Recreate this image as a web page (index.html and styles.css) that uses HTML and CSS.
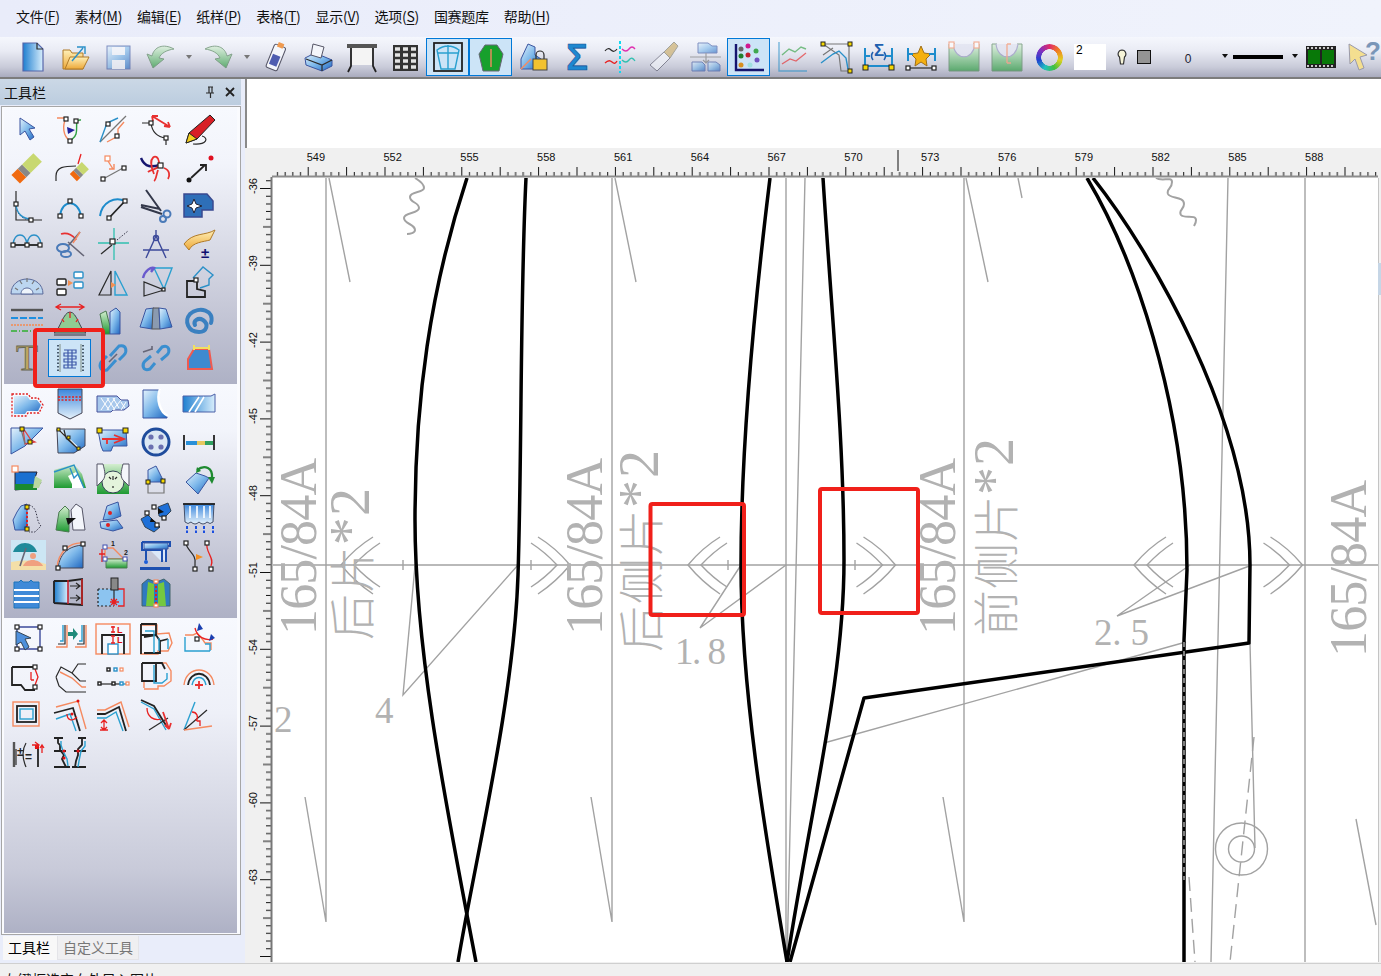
FILE: index.html
```html
<!DOCTYPE html>
<html lang="zh-CN">
<head>
<meta charset="utf-8">
<title>工具栏</title>
<link rel="stylesheet" href="styles.css">
</head>
<body>
<svg class="defs" width="0" height="0" aria-hidden="true"><defs>
<linearGradient id="gb" x1="0" y1="0" x2="1" y2="1"><stop offset="0" stop-color="#e4f2fc"/><stop offset=".5" stop-color="#7db8ea"/><stop offset="1" stop-color="#1f66c0"/></linearGradient>
<linearGradient id="gh" x1="0" y1="0" x2="1" y2="0"><stop offset="0" stop-color="#1f7fd0"/><stop offset="1" stop-color="#d8eefc"/></linearGradient>
<linearGradient id="gg" x1="0" y1="0" x2="0" y2="1"><stop offset="0" stop-color="#d4eed0"/><stop offset="1" stop-color="#1e9a32"/></linearGradient>
<linearGradient id="gy" x1="0" y1="0" x2="0" y2="1"><stop offset="0" stop-color="#fff0b8"/><stop offset="1" stop-color="#eda838"/></linearGradient>
<linearGradient id="gv" x1="0" y1="0" x2="0" y2="1"><stop offset="0" stop-color="#3a86dc"/><stop offset="1" stop-color="#e6f2fb"/></linearGradient>
</defs></svg>

<nav class="menubar">
<span class="mi">文件(<u>F</u>)</span><span class="mi">素材(<u>M</u>)</span><span class="mi">编辑(<u>E</u>)</span><span class="mi">纸样(<u>P</u>)</span><span class="mi">表格(<u>T</u>)</span><span class="mi">显示(<u>V</u>)</span><span class="mi">选项(<u>S</u>)</span><span class="mi">国赛题库</span><span class="mi">帮助(<u>H</u>)</span>
</nav>

<div class="toolbar">
<div class="tb"><svg class="ic" viewBox="0 0 32 32"><path class="fh" d="M7,2H21L27,8V30H7Z"/><path class="ln" d="M21,2V8H27"/></svg></div>
<div class="tb"><svg class="ic" viewBox="0 0 32 32"><path class="fy" d="M4,9H11L13,12H24V28H4Z"/><path class="fy" d="M6,28L11,16H30L24,28Z"/><path class="b" d="M13,20L24,7M18,6H26V13"/></svg></div>
<div class="tb"><svg class="ic fade" viewBox="0 0 32 32"><rect class="fb" x="5" y="5" width="23" height="23"/><rect class="wf" x="10" y="6" width="13" height="8"/><rect class="wf" x="10" y="19" width="13" height="9"/></svg></div>
<div class="tb"><svg class="ic fade" viewBox="0 0 32 32"><path class="fg" transform="matrix(-1 0 0 1 32 0)" d="M3,8C14,2 23,6 25,15L30,13L24,27L13,18L18,17C16,12 10,9 3,8Z"/></svg></div>
<div class="drop"></div>
<div class="tb"><svg class="ic fade" viewBox="0 0 32 32"><path class="fg" d="M3,8C14,2 23,6 25,15L30,13L24,27L13,18L18,17C16,12 10,9 3,8Z"/></svg></div>
<div class="drop"></div>
<div class="tb"><svg class="ic" viewBox="0 0 32 32"><g transform="rotate(22 16 16)"><rect class="wf2" x="10" y="4" width="12" height="25" rx="2"/><rect x="12" y="14" width="8" height="11" fill="#4f5db0"/><rect x="13" y="1" width="6" height="5" fill="#ef9a50"/></g></svg></div>
<div class="tb"><svg class="ic" viewBox="0 0 32 32"><path class="fb" d="M2,17L12,12L29,19V25L19,30L3,24Z"/><path class="wf2" d="M8,14L10,3L21,6L18,17Z"/><path class="ln" d="M3,18L19,24L29,19M19,24V30"/></svg></div>
<div class="tb"><svg class="ic" viewBox="0 0 32 32"><rect x="1" y="3" width="30" height="4" fill="#555"/><rect class="wf3" x="6" y="7" width="20" height="17"/><path class="k2" d="M5,7V25L2,31M27,7V25L30,31"/></svg></div>
<div class="tb"><svg class="ic" viewBox="0 0 32 32"><rect x="4" y="4" width="25" height="26" fill="#333"/><path class="gc" d="M6,8H11M14,8H19M22,8H27M6,14H11M14,14H19M22,14H27M6,20H11M14,20H19M22,20H27M6,26H11M14,26H19M22,26H27"/></svg></div>
<div class="tb sel"><svg class="ic" viewBox="0 0 32 32"><rect class="k2" x="2" y="2" width="28" height="28"/><path class="tq" d="M5,9Q16,1 27,9L23,28H9ZM5,12H27M16,4V28"/></svg></div>
<div class="tb sel"><svg class="ic" viewBox="0 0 32 32"><path d="M10,4H22L28,13L24,30H8L4,13Z" fill="#17a02c" stroke="#667"/><path class="o" d="M16,8V26"/></svg></div>
<div class="tb"><svg class="ic" viewBox="0 0 32 32"><path class="fb" d="M10,3L17,6V14L23,18V28H3V18Z"/><path class="k1" d="M18,18V14A4,4 0 0 1 26,14V18"/><rect x="15" y="18" width="14" height="11" fill="#f2c230" stroke="#444"/><path class="o" d="M3,28L13,18"/></svg></div>
<div class="tb"><svg class="ic" viewBox="0 0 32 32"><text class="sig" x="16" y="29">Σ</text></svg></div>
<div class="tb"><svg class="ic" viewBox="0 0 32 32"><path class="k1" d="M1,10Q4,6 7,9T13,8"/><path class="pk" d="M18,8Q22,12 25,8T31,8"/><path class="r" d="M1,22Q5,18 8,21T13,20"/><path class="tl" d="M18,19Q22,23 25,19T31,20"/><path class="cy" d="M16,0V32"/></svg></div>
<div class="tb"><svg class="ic fade" viewBox="0 0 32 32"><path class="wf2" d="M3,24L17,11L23,17L10,30Z"/><path d="M17,11L27,1L31,5L23,17Z" fill="#c8a860" stroke="#776"/></svg></div>
<div class="tb"><svg class="ic fade" viewBox="0 0 32 32"><path class="fb" d="M8,2H18L22,5H27V12H8Z"/><path class="fb" d="M2,21H12L15,24V30H2Z"/><path class="fb" d="M18,21H26L30,24V30H18Z"/><path class="a" d="M0,16H31M16,12V22M13,19L16,22L19,19"/></svg></div>
<div class="tb sel"><svg class="ic" viewBox="0 0 32 32"><path class="nv" d="M3,3V29H31"/><circle cx="8" cy="8" r="2.5" fill="#666"/><circle cx="15" cy="5" r="2.5" fill="#d01890"/><circle cx="15" cy="14" r="2.5" fill="#c02030"/><circle cx="8" cy="15" r="2.5" fill="#20802c"/><circle cx="23" cy="10" r="2.5" fill="#40a850"/><circle cx="24" cy="19" r="2.5" fill="#7050c0"/><circle cx="8" cy="24" r="2.5" fill="#d89020"/><circle cx="17" cy="24" r="2.5" fill="#a0e0e0"/></svg></div>
<div class="tb"><svg class="ic fade" viewBox="0 0 32 32"><path class="b" d="M3,1V30H31"/><path class="g" d="M6,14L13,8L19,11L25,6L30,8"/><path class="r" d="M6,23L14,18L20,20L30,12"/></svg></div>
<div class="tb"><svg class="ic" viewBox="0 0 32 32"><path class="a" d="M4,3H30V30H22L20,14L4,3M4,14L14,7"/><path class="b" d="M2,22L14,13L20,10L27,17L29,28"/><rect class="hy" x="2" y="1" width="4" height="4"/><rect class="hy" x="29" y="1" width="4" height="4"/><rect class="hy" x="29" y="28" width="4" height="4"/></svg></div>
<div class="tb"><svg class="ic" viewBox="0 0 32 32"><text class="sigs" x="17" y="15">Σ</text><path class="b2" d="M3,7V27M30,7V27M3,15H8M24,15H30M3,25H30"/><path class="bt" d="M11,11Q8,15 11,19M22,11Q25,15 22,19"/><rect class="hy" x="1" y="24" width="5" height="5"/><rect class="hy" x="27" y="24" width="5" height="5"/></svg></div>
<div class="tb"><svg class="ic" viewBox="0 0 32 32"><path d="M16,5L19,12L26,13L21,18L22,25L16,21L10,25L11,18L6,13L13,12Z" fill="#f4b010" stroke="#a07018"/><path class="b2" d="M3,7V20M30,7V20M3,13H8M24,13H30"/><path class="k1" d="M3,27H30"/><rect class="h" x="1" y="25" width="4" height="4"/><rect class="h" x="27" y="25" width="4" height="4"/></svg></div>
<div class="tb"><svg class="ic fade" viewBox="0 0 32 32"><path class="fg" d="M1,3H7C8,16 24,16 25,3H31V30H1Z"/><path class="ul" d="M5,3C7,20 25,20 27,3"/><rect class="ho" x="1" y="1" width="5" height="6"/><rect class="ho" x="26" y="1" width="5" height="6"/></svg></div>
<div class="tb"><svg class="ic fade" viewBox="0 0 32 32"><path class="fg" d="M1,3H6C8,16 24,16 26,3H31V30H1Z"/><path class="ul" d="M5,3C7,20 25,20 27,3"/><path class="o" d="M16,3V22M16,3H20M16,22H20"/></svg></div>
<div class="tb"><div class="ring"></div></div>
<div class="numbox">2</div>
<div class="bulb"><svg class="ic16" viewBox="0 0 10 16"><path d="M5,1A4,4 0 0 1 7.500,8L6.500,15H3.500L2.500,8A4,4 0 0 1 5,1Z" fill="#f6f4d8" stroke="#333" stroke-width="1.2"/></svg></div>
<div class="swatch"></div>
<div class="zero">0</div>
<div class="mini first"></div>
<div class="thick"></div>
<div class="mini"></div>
<svg class="film" viewBox="0 0 30 22"><rect width="30" height="22" fill="#222"/><rect x="2" y="4" width="12" height="14" fill="#087808"/><rect x="16" y="4" width="12" height="14" fill="#087808"/><path class="wl dash" d="M1,2H29M1,20H29"/></svg>
<svg class="ic help" viewBox="0 0 32 32"><path d="M2,3L20,14L13,16L17,27L12,29L8,18L3,23Z" fill="#f4df90" stroke="#99a"/><text class="q" x="18" y="19">?</text></svg>
</div>

<main class="main">
<aside class="side">
<header class="side-head"><span class="side-title">工具栏</span>
<svg class="pin" viewBox="0 0 10 12"><path d="M3,1H8M4,1V7H7V1M1,7H9M5.5,7V12" class="k1"/></svg>
<svg class="close" viewBox="0 0 12 12"><path d="M2,2L10,10M10,2L2,10" class="k2"/></svg>
</header>
<div class="panel">
<section class="tools s1">
<div class="cell"><svg class="ic" viewBox="0 0 32 32"><path class="fb" d="M9,4V21L14,17L19,26L23,23L18,15L24,14Z"/></svg></div>
<div class="cell"><svg class="ic" viewBox="0 0 32 32"><path class="o" d="M3,4H12C8,12 9,22 16,27"/><path class="g" d="M27,6C20,5 24,14 22,20C21,24 18,25 16,27"/><path class="nf" d="M13,13L21,16L14,20Z"/><rect class="h" x="10" y="3" width="4" height="4"/><rect class="h" x="20" y="5" width="4" height="4"/><rect class="h" x="14" y="25" width="4" height="4"/></svg></div>
<div class="cell"><svg class="ic" viewBox="0 0 32 32"><path class="a" d="M3,28L29,2"/><path class="b" d="M3,28L10,9L21,4"/><path class="o" d="M10,28L21,22V15L27,8"/><rect class="h" x="9" y="8" width="4" height="4"/><rect class="h" x="18" y="20" width="4" height="4"/></svg></div>
<div class="cell"><svg class="ic" viewBox="0 0 32 32"><path class="k1" d="M2,9H11C12,18 18,23 26,24V31"/><path class="r2" d="M12,2L30,13M12,2L18,2M12,2L13,7M30,13L24,12M30,13L28,8"/><rect class="h" x="9" y="7" width="4" height="4"/><rect class="h" x="24" y="22" width="4" height="4"/></svg></div>
<div class="cell"><svg class="ic" viewBox="0 0 32 32"><path d="M3,29L6,19L27,1L32,6L14,25Z" fill="#d81f26" stroke="#222"/><path d="M3,29L6,19L14,25Z" fill="#f4d020" stroke="#222"/><path class="k1" d="M10,30C24,31 26,24 19,22"/></svg></div>

<div class="cell"><svg class="ic" viewBox="0 0 32 32"><g transform="rotate(-45 16 16)"><rect x="0" y="10" width="9" height="12" fill="#f06a10"/><rect x="9" y="10" width="6" height="12" fill="#888"/><rect x="15" y="10" width="16" height="12" fill="#c8d870"/></g></svg></div>
<div class="cell"><svg class="ic" viewBox="0 0 32 32"><path class="k1" d="M2,29V24C2,15 10,14 22,14"/><g transform="rotate(-45 25 20)"><rect x="17" y="15" width="5" height="10" fill="#f06a10"/><rect x="22" y="15" width="4" height="10" fill="#888"/><rect x="26" y="15" width="8" height="10" fill="#c8d870"/></g><path class="r" d="M24,12L27,2"/></svg></div>
<div class="cell"><svg class="ic" viewBox="0 0 32 32"><rect class="ho" x="8" y="4" width="5" height="5"/><path class="o" d="M11,9L16,17M12,17H17V12"/><path class="a" d="M6,27L26,16"/><rect class="h" x="4" y="25" width="4" height="4"/><rect class="h" x="25" y="14" width="4" height="4"/></svg></div>
<div class="cell"><svg class="ic" viewBox="0 0 32 32"><path class="nv" d="M1,6C5,16 12,15 20,13"/><path class="r2" d="M14,22C6,4 18,0 19,10C20,18 11,17 8,20M18,18C16,24 16,28 14,29M24,16C30,18 30,24 28,27"/><rect class="h" x="18" y="11" width="5" height="5"/></svg></div>
<div class="cell"><svg class="ic" viewBox="0 0 32 32"><circle cx="6" cy="28" r="2.5" fill="#111"/><path class="k2" d="M8,26L22,13M17,13H23V19"/><circle cx="28" cy="6" r="2.5" fill="#e01020"/></svg></div>

<div class="cell"><svg class="ic" viewBox="0 0 32 32"><path class="k1" d="M5,1V30H31"/><path class="dot" d="M5,14C5,24 12,30 20,30"/><path class="b" d="M5,15C6,24 12,29 20,29"/><rect class="h" x="3" y="12" width="4" height="4"/><rect class="h" x="18" y="28" width="4" height="4"/></svg></div>
<div class="cell"><svg class="ic" viewBox="0 0 32 32"><path class="b2" d="M6,26C8,9 24,9 27,26"/><rect class="h" x="4" y="24" width="4" height="4"/><rect class="h" x="25" y="24" width="4" height="4"/><rect class="h" x="14" y="9" width="4" height="4"/></svg></div>
<div class="cell"><svg class="ic" viewBox="0 0 32 32"><path class="b2" d="M3,26C5,12 18,6 28,11"/><path class="k2" d="M12,28L28,11"/><rect class="h" x="10" y="26" width="4" height="4"/><rect class="h" x="26" y="9" width="4" height="4"/></svg></div>
<div class="cell"><svg class="ic" viewBox="0 0 32 32"><path class="bl" d="M1,17L22,24M6,0L21,21M20,19L1,15"/><circle cx="27" cy="24" r="3.5" class="sc"/><circle cx="23" cy="29" r="3" class="sc"/></svg></div>
<div class="cell"><svg class="ic" viewBox="0 0 32 32"><path class="fbd" d="M1,4H24L30,11V20H19V27H1Z"/><path d="M11,9L13,14L19,16L13,18L11,23L9,18L4,16L9,14Z" fill="#fff" stroke="#223"/></svg></div>

<div class="cell"><svg class="ic" viewBox="0 0 32 32"><path class="b" d="M2,16C4,4 14,4 16,16C18,4 28,4 30,16"/><path class="k2" d="M2,17H30"/><rect class="h" x="0" y="15" width="4" height="4"/><rect class="h" x="14" y="15" width="4" height="4"/><rect class="h" x="27" y="15" width="4" height="4"/></svg></div>
<div class="cell"><svg class="ic" viewBox="0 0 32 32"><path class="r2" d="M7,6C14,4 20,8 22,12"/><path class="a2" d="M14,18L26,4M14,14L30,28"/><ellipse cx="9" cy="20" rx="6" ry="4" class="sc"/><ellipse cx="12" cy="26" rx="5" ry="3" class="sc"/><path class="o" d="M19,15L26,4"/></svg></div>
<div class="cell"><svg class="ic" viewBox="0 0 32 32"><path class="tl" d="M17,0V32M1,15H32"/><path class="k1" d="M4,26L15,17"/><path class="dot" d="M20,12L31,3"/><rect class="h" x="13" y="11" width="5" height="5"/></svg></div>
<div class="cell"><svg class="ic" viewBox="0 0 32 32"><path class="nv1" d="M16,2V8M16,8L6,30M16,8L26,30M3,22H29"/><circle cx="16" cy="10" r="2.5" class="nv1"/></svg></div>
<div class="cell"><svg class="ic" viewBox="0 0 32 32"><path class="fy" d="M1,16C10,4 22,8 32,2L27,12C20,14 10,14 6,22Z"/><text class="pm" x="22" y="30">±</text></svg></div>

<div class="cell"><svg class="ic" viewBox="0 0 32 32"><path d="M0,28C0,8 32,8 32,28Z" fill="#bcd6f0" stroke="#5a6a9a"/><path d="M10,28C10,20 22,20 22,28Z" fill="#eef4fb" stroke="#5a6a9a"/><path class="a" d="M4,22L7,24M9,15L11,18M16,12V16M23,15L21,18M28,22L25,24"/></svg></div>
<div class="cell"><svg class="ic" viewBox="0 0 32 32"><rect class="blk" x="3" y="13" width="9" height="6" rx="1"/><rect class="blk" x="3" y="23" width="9" height="6" rx="1"/><path d="M14,14L19,17L14,20Z" fill="#f59050"/><rect class="blu" x="20" y="6" width="9" height="6" rx="1"/><rect class="blu" x="20" y="16" width="9" height="6" rx="1"/></svg></div>
<div class="cell"><svg class="ic" viewBox="0 0 32 32"><path class="k1" d="M14,5V29H2Z"/><path class="tq" d="M18,5V29H30Z"/><path d="M14,16L19,19L14,22Z" fill="#f59050"/></svg></div>
<div class="cell"><svg class="ic" viewBox="0 0 32 32"><path class="k1" d="M4,16V30L24,24Z"/><path class="tq" d="M14,2H32L24,23Z"/><path class="pu" d="M3,12C5,4 11,1 14,2L11,6"/><rect class="h" x="22" y="22" width="3" height="3"/></svg></div>
<div class="cell"><svg class="ic" viewBox="0 0 32 32"><path class="k2" d="M4,15V31H22V25L14,23V15Z"/><path class="b" d="M10,12L20,1L30,9L26,13L26,19L17,22"/><rect class="h" x="11" y="12" width="4" height="4"/></svg></div>

<div class="cell"><svg class="ic" viewBox="0 0 32 32"><path class="a3" d="M0,6H32"/><path class="bd" d="M0,14H32"/><path class="od" d="M0,21H32"/><path class="gd" d="M0,27H32"/></svg></div>
<div class="cell"><svg class="ic" viewBox="0 0 32 32"><path d="M0,29C6,26 9,8 16,8C23,8 26,26 32,29Z" fill="#8fcc92" stroke="#445"/><path class="r" d="M2,3H30M7,0L2,3L7,6M25,0L30,3L25,6M16,8V14M10,18L8,15M22,18L24,15"/><path class="a2" d="M0,31H32"/></svg></div>
<div class="cell"><svg class="ic" viewBox="0 0 32 32"><path class="fg" d="M3,10L9,7L13,22V30H7Z"/><path class="fb" d="M13,8L19,4L23,8V30H13Z"/></svg></div>
<div class="cell"><svg class="ic" viewBox="0 0 32 32"><path class="fb" d="M6,5L14,4L12,25L0,23Z"/><path class="fg2" d="M13,4H19L20,25H12Z"/><path class="fb" d="M19,4L26,5L32,23L20,25Z"/></svg></div>
<div class="cell"><svg class="ic" viewBox="0 0 32 32"><path class="spi" d="M28,19C32,6 16,2 7,10C1,17 5,28 16,28C24,28 26,20 20,16C15,13 10,17 12,21"/></svg></div>

<div class="cell"><svg class="ic" viewBox="0 0 32 32"><text class="tee" x="16" y="28">T</text></svg></div>
<div class="cell sel"><svg class="ic" viewBox="0 0 32 32"><path class="a3 thin" d="M6,2V30M27,2V30"/><path class="dotn" d="M4,3V30M29,3V30"/><path class="zig" d="M10,8H22V11H10V14H22V17H10V20H22V23H10V26H22M14,8V26M18,8V26"/></svg></div>
<div class="cell"><svg class="ic" viewBox="0 0 32 32"><path class="ch" d="M13,14L22,4C30,2 30,10 27,13L22,18M19,18L10,28C2,30 2,22 5,19L10,14"/><path class="a2" d="M12,20L20,12"/></svg></div>
<div class="cell"><svg class="ic" viewBox="0 0 32 32"><path class="ch" d="M17,11L22,5C30,2 30,10 27,13L21,18M15,21L10,27C2,30 2,22 5,19L11,14"/><path class="a2" d="M3,10L12,7M12,4V8"/></svg></div>
<div class="cell"><svg class="ic" viewBox="0 0 32 32"><path d="M11,7H26L29,27H5V17Z" fill="#3f8ad0" stroke="#f05a50" stroke-width="2"/><path d="M11,6H26M11,3V8M26,3V8" stroke="#f2e060" stroke-width="2"/></svg></div>
</section>

<section class="tools s2">
<div class="cell"><svg class="ic" viewBox="0 0 32 32"><path class="fb nb" d="M3,8H16L19,12H26L30,17L27,23H16L14,26H3Z"/><path class="rd" d="M1,6H17L20,10H27L32,17L28,25H17L15,28H1Z"/></svg></div>
<div class="cell"><svg class="ic" viewBox="0 0 32 32"><path d="M4,1H28V25L16,31L4,25Z" fill="url(#gv)" stroke="#445"/><path class="rd" d="M4,9H28M4,12H28"/></svg></div>
<div class="cell"><svg class="ic" viewBox="0 0 32 32"><path d="M0,8H20L24,12H31L32,18L27,22H16L14,24H0Z" fill="#a8c8ec" stroke="#45509a"/><path class="hatch" d="M4,10L12,22M10,10L18,22M16,10L22,20M24,14L28,20M12,10L4,22M18,10L10,22M24,12L16,22M29,14L24,22"/></svg></div>
<div class="cell"><svg class="ic" viewBox="0 0 32 32"><path class="fb" d="M3,2H20C16,12 20,24 27,28V30H3Z"/><path d="M20,1C16,12 20,24 28,28" stroke="#fff" stroke-width="2.5" fill="none"/></svg></div>
<div class="cell"><svg class="ic" viewBox="0 0 32 32"><path class="fh2" d="M0,8H28L32,6V24H0Z"/><path class="wl" d="M6,24L16,9M12,24L21,9"/></svg></div>

<div class="cell"><svg class="ic" viewBox="0 0 32 32"><path class="fb" d="M0,2H32L14,20L0,28Z"/><path class="rt" d="M12,2L20,14L24,16L14,18Z"/><path class="a" d="M10,3L14,18"/><rect class="hy" x="9" y="1" width="4" height="4"/><rect class="hy" x="17" y="14" width="4" height="4"/></svg></div>
<div class="cell"><svg class="ic" viewBox="0 0 32 32"><path class="fb rev" d="M3,3H31V20L20,27H4Z"/><path class="wb" d="M5,4L24,22"/><path class="k1" d="M4,3L25,24M10,4L12,12L22,21"/><rect class="hy" x="3" y="2" width="3" height="3"/><rect class="hy" x="13" y="10" width="3" height="3"/><rect class="hy" x="23" y="21" width="3" height="3"/></svg></div>
<div class="cell"><svg class="ic" viewBox="0 0 32 32"><path class="fb" d="M1,4H29L30,20H16L14,25H6L4,20Z"/><path class="r2" d="M5,13H27M17,9L27,13L17,17M10,13V18"/><rect class="hy" x="0" y="2" width="5" height="5"/><rect class="hy" x="26" y="2" width="5" height="5"/></svg></div>
<div class="cell"><svg class="ic" viewBox="0 0 32 32"><circle cx="16" cy="16" r="13" fill="#dce8f4" stroke="#1f4c9c" stroke-width="3"/><circle cx="11" cy="11" r="2.6" fill="#6a70b0"/><circle cx="21" cy="11" r="2.6" fill="#6a70b0"/><circle cx="11" cy="21" r="2.6" fill="#6a70b0"/><circle cx="21" cy="21" r="2.6" fill="#6a70b0"/></svg></div>
<div class="cell"><svg class="ic" viewBox="0 0 32 32"><path class="k2" d="M1,9V24M31,9V24"/><path d="M3,15H14V19H3Z" fill="#2a90d8"/><path d="M14,15H22V19H14Z" fill="#e6c860"/><path d="M22,15H30V19H22Z" fill="#30a060"/></svg></div>

<div class="cell"><svg class="ic" viewBox="0 0 32 32"><path d="M4,8H26L24,14L30,18L26,24L4,26Z" fill="#1a70d0" stroke="#223"/><path d="M4,20H22L26,22V26H4Z" fill="#1a8a30"/><path d="M24,12L31,16L28,24L22,24Z" fill="#b8d8a0"/><rect class="ho" x="1" y="2" width="6" height="6"/></svg></div>
<div class="cell"><svg class="ic" viewBox="0 0 32 32"><path d="M0,6L20,0L28,10L32,24H0Z" fill="url(#gg)" stroke="none"/><path d="M18,20L14,12L22,8L30,24H18Z" fill="#fff"/><path class="b" d="M0,8L20,1L24,10L30,24M16,4L20,14L24,10"/></svg></div>
<div class="cell"><svg class="ic" viewBox="0 0 32 32"><rect x="0" y="0" width="32" height="30" fill="url(#gg)"/><circle cx="16" cy="18" r="11" fill="#e4f4dc" stroke="#345"/><path class="k1" d="M12,13L14,15M20,13L18,15M16,22V24M16,12V16"/><path class="wf2" d="M0,0H6C8,8 9,12 6,16L0,22Z"/><path class="wf2" d="M32,0H26C24,8 23,12 26,16L32,22Z"/></svg></div>
<div class="cell"><svg class="ic" viewBox="0 0 32 32"><path class="fb" d="M8,6L16,2L20,10L24,18H8Z"/><path class="a" d="M8,18V29H24V18"/><rect class="hy" x="6" y="16" width="4" height="4"/><rect class="hy" x="21" y="15" width="4" height="4"/></svg></div>
<div class="cell"><svg class="ic" viewBox="0 0 32 32"><path class="fb" d="M3,18L13,9L22,12L26,14L15,30Z"/><path class="grn" d="M14,6C22,0 30,4 29,14"/><path d="M25,13H32L29,20Z" fill="#1e8a30"/><path d="M14,3L18,7L13,9Z" fill="#1e8a30"/></svg></div>

<div class="cell"><svg class="ic" viewBox="0 0 32 32"><path class="fb" d="M10,4L16,2V28H4L2,18L6,10Z"/><path class="rd2" d="M16,6V26"/><path class="dot" d="M18,3C28,6 24,18 30,24L24,30H18"/><rect class="hy" x="14" y="3" width="4" height="4"/><rect class="hy" x="14" y="25" width="4" height="4"/></svg></div>
<div class="cell"><svg class="ic" viewBox="0 0 32 32"><path class="fg" d="M5,10L11,4L15,8V30L2,28Z"/><path class="wf2" d="M17,8L22,2L28,6L31,28H19Z"/><path d="M12,16H22L14,23Z" fill="#111"/></svg></div>
<div class="cell"><svg class="ic" viewBox="0 0 32 32"><path class="fb" d="M10,4L21,0L24,14L16,17L6,18Z"/><path class="fb" d="M3,20L20,18L26,26L16,29L4,26Z"/><circle cx="13" cy="11" r="2" fill="#e02020"/><circle cx="11" cy="23" r="2" fill="#e02020"/></svg></div>
<div class="cell"><svg class="ic" viewBox="0 0 32 32"><path class="fs" d="M18,5L28,1L31,9L24,16L19,14Z"/><path class="fs" d="M1,17L8,13L20,25L14,30L5,25Z"/><path d="M18,6L24,10L18,12Z M11,16L16,20L10,20Z" fill="#111"/><rect class="h" x="12" y="3" width="4" height="4"/><rect class="h" x="5" y="9" width="4" height="4"/><rect class="h" x="22" y="14" width="4" height="4"/><rect class="h" x="15" y="21" width="4" height="4"/></svg></div>
<div class="cell"><svg class="ic" viewBox="0 0 32 32"><path d="M1,2H31L30,20Q27,23 24,20Q20,24 16,20Q12,24 8,20Q5,23 2,20Z" fill="url(#gv)" stroke="#44506a"/><path class="k2" d="M0,2H32"/><path class="wl" d="M7,4V16M14,4V16M21,4V16M27,4V16"/><path class="bdrop" d="M4,24V31M13,24V31M21,24V31M30,24V31"/></svg></div>

<div class="cell"><svg class="ic" viewBox="0 0 32 32"><rect width="35" height="30" fill="#cce6f4"/><path d="M0,22Q16,18 35,24V30H0Z" fill="#f4dfa8"/><path d="M2,12C6,0 22,0 26,12Z" fill="#1e8a9a"/><path class="a2" d="M15,8L9,26"/><circle cx="22" cy="16" r="3" fill="#f0a080"/><path d="M12,26C15,18 28,18 32,26Z" fill="#f0a080"/></svg></div>
<div class="cell"><svg class="ic" viewBox="0 0 32 32"><path class="fh3" d="M4,28C6,12 16,6 29,5V28Z"/><path class="o" d="M3,28C4,12 16,2 29,3"/><rect class="h" x="2" y="26" width="4" height="4"/><rect class="h" x="9" y="6" width="4" height="4"/><rect class="h" x="27" y="2" width="4" height="4"/></svg></div>
<div class="cell"><svg class="ic" viewBox="0 0 32 32"><path class="o" d="M8,8H16L27,19H8M8,8V19"/><path class="fg" d="M9,19H30V28H9Z"/><path class="r" d="M5,9V22M2,14H8"/><text class="tiny" x="14" y="6">1</text><text class="tiny" x="27" y="15">2</text><rect class="hb" x="6" y="5" width="4" height="4"/><rect class="hb" x="6" y="17" width="4" height="4"/><rect class="hb" x="26" y="17" width="4" height="4"/></svg></div>
<div class="cell"><svg class="ic" viewBox="0 0 32 32"><path class="sew" d="M2,2H30V6H26V22M2,2V10H22V22M6,10V20"/><path class="nvf" d="M0,27H30V30H0Z"/><circle cx="6" cy="22" r="2" fill="#1e5fd8"/><path class="fb" d="M4,3H28V9H4Z"/></svg></div>
<div class="cell"><svg class="ic" viewBox="0 0 32 32"><path class="k1" d="M3,3C3,10 14,14 12,24V29"/><path class="r" d="M24,3C22,12 32,18 28,26"/><path d="M13,14L20,17L13,20Z" fill="#f59020"/><rect class="h" x="1" y="1" width="4" height="4"/><rect class="h" x="22" y="1" width="4" height="4"/><rect class="h" x="10" y="27" width="4" height="4"/><rect class="h" x="26" y="27" width="4" height="4"/></svg></div>

<div class="cell"><svg class="ic" viewBox="0 0 32 32"><path d="M3,4H8L10,2L12,4H18L20,2L22,4H28V30H3Z" fill="#3f8ad8" stroke="#1e74b8"/><path class="wb" d="M3,12H28M3,18H28M3,24H28"/></svg></div>
<div class="cell"><svg class="ic" viewBox="0 0 32 32"><path class="fh" d="M0,3H14V25H0Z"/><path class="k2" d="M0,3H14L28,1V27L14,26L0,25M0,3V25"/><path class="r" d="M14,2V26M28,1V27"/><path class="k1" d="M16,8H26M22,5L26,8L22,11M16,20H26M22,17L26,20L22,23"/></svg></div>
<div class="cell"><svg class="ic" viewBox="0 0 32 32"><rect x="1" y="11" width="26" height="17" fill="#8cc4f0"/><path class="dotk" d="M1,11H17M1,11V28H17"/><path class="r" d="M21,11H27V28H21"/><rect x="14" y="0" width="7" height="12" fill="#888" stroke="#222"/><path class="k1" d="M17,12V22"/><path class="r" d="M13,24H22M17,20V28M14,21L20,27M20,21L14,27"/></svg></div>
<div class="cell"><svg class="ic" viewBox="0 0 32 32"><path d="M8,1L13,3H19L24,1L30,6V28H2V6Z" fill="#2f7ac0" stroke="#44646a"/><path d="M8,4L14,6V28H6ZM24,4L18,6V28H26Z" fill="#74c840"/><path class="rd2" d="M16,4V26"/><rect class="ho" x="14" y="2" width="4" height="3"/><rect class="ho" x="14" y="26" width="4" height="3"/></svg></div>
<div class="cell"></div>
</section>

<section class="tools s3">
<div class="cell"><svg class="ic" viewBox="0 0 32 32"><path class="nv1" d="M6,4H29V26H6Z"/><path class="fbs" d="M5,8V22L10,19L14,27L18,24L14,16L20,15Z"/><rect class="h" x="4" y="2" width="4" height="4"/><rect class="h" x="27" y="2" width="4" height="4"/><rect class="h" x="4" y="24" width="4" height="4"/><rect class="h" x="27" y="24" width="4" height="4"/></svg></div>
<div class="cell"><svg class="ic" viewBox="0 0 32 32"><path class="o" d="M2,24H13V2"/><path class="k1" d="M4,21H11V2"/><path class="tq" d="M6,18H9V2"/><path class="o" d="M21,24H32V2"/><path class="k1" d="M23,21H30V2"/><path class="tq" d="M25,18H28V2"/><path d="M14,9H19V5L24,11L19,17V13H14Z" fill="#1f8a7a"/></svg></div>
<div class="cell"><svg class="ic" viewBox="0 0 32 32"><rect class="o" x="-1" y="1" width="34" height="30"/><path class="k2" d="M5,31V12H27V31"/><rect class="blu" x="11" y="21" width="10" height="10"/><path class="r" d="M16,3V10M14,4H18M14,9H18M16,13V20M14,13H18M14,20H18"/><text class="ell" x="20" y="10">L</text><text class="ell" x="20" y="20">L</text></svg></div>
<div class="cell"><svg class="ic" viewBox="0 0 32 32"><path class="o" d="M1,2H17V11L29,10L32,20L28,28H18V31H1Z"/><path class="k2" d="M1,1H16V12H1M1,1V31"/><path class="k2" d="M4,14L16,12L20,18L28,16M20,18V30H4"/><path class="tq" d="M5,8H14V30M19,15V28M28,16V26"/></svg></div>
<div class="cell"><svg class="ic" viewBox="0 0 32 32"><path class="o" d="M2,12H10L14,10L20,17L22,20H28V27"/><path class="tq" d="M2,14V28H27M22,21H27V28"/><path class="r" d="M12,5C14,14 22,18 30,16"/><path class="bf" d="M14,8L16,0L20,6ZM28,11L32,15L26,18Z"/><rect class="h" x="12" y="14" width="4" height="4"/></svg></div>

<div class="cell"><svg class="ic" viewBox="0 0 32 32"><path class="k2" d="M1,6H24M1,6V24H10L14,29H24"/><path class="r" d="M24,8L27,16L24,24M20,11V19M20,19H23"/><rect class="h" x="22" y="4" width="4" height="4"/><rect class="h" x="22" y="24" width="4" height="4"/></svg></div>
<div class="cell"><svg class="ic" viewBox="0 0 32 32"><path class="k1" d="M2,16L7,6L18,12L26,20H32M2,16L5,25L12,31H32M18,12L24,3H32"/><path class="o" d="M6,11L18,17L28,26H32"/></svg></div>
<div class="cell"><svg class="ic" viewBox="0 0 32 32"><path class="k1" d="M1,23H26"/><path class="tq" d="M26,23H32"/><rect class="blk" x="1" y="21" width="3" height="3"/><rect class="blk" x="15" y="21" width="3" height="3"/><rect class="blu" x="23" y="21" width="3" height="3"/><rect class="ho" x="29" y="21" width="3" height="3"/><rect class="blk" x="10" y="7" width="3" height="3"/><rect class="blu" x="17" y="7" width="3" height="3"/><rect class="ho" x="23" y="7" width="3" height="3"/></svg></div>
<div class="cell"><svg class="ic" viewBox="0 0 32 32"><path class="o" d="M4,27V20M4,28H18V25H24L31,20V10L26,2H4"/><path class="k2" d="M2,2V20H16V2H2M12,2H22L25,8"/><path class="tq" d="M14,4V22H22L27,18V12"/></svg></div>
<div class="cell"><svg class="ic" viewBox="0 0 32 32"><path class="o" d="M1,24C3,4 29,4 31,24"/><path class="k2" d="M5,24C7,9 25,9 27,24"/><path class="tq" d="M9,24C11,14 21,14 23,24"/><path class="r2" d="M16,20V28M12,24H20"/></svg></div>

<div class="cell"><svg class="ic" viewBox="0 0 32 32"><rect class="o" x="2" y="3" width="26" height="24"/><rect class="k2" x="6" y="7" width="19" height="16"/><rect class="tq" x="9" y="10" width="13" height="10"/></svg></div>
<div class="cell"><svg class="ic" viewBox="0 0 32 32"><path class="o" d="M2,8L24,2L32,30"/><path class="k2" d="M0,14L19,9L26,32"/><path class="tq" d="M2,20L16,15L22,32"/><path class="r" d="M13,15C13,21 18,23 23,18"/><circle cx="24" cy="2" r="1.5" fill="#e01010"/><circle cx="18" cy="15" r="1.5" fill="#e01010"/></svg></div>
<div class="cell"><svg class="ic" viewBox="0 0 32 32"><path class="o" d="M0,11H8L24,3L32,28"/><path class="k2" d="M0,15H8L22,8L29,32"/><path class="tq" d="M0,19H9L19,13L26,32"/><path class="r" d="M7,21V31M4,24L7,21L10,24M4,28L7,31L10,28M3,31H11"/></svg></div>
<div class="cell"><svg class="ic" viewBox="0 0 32 32"><path class="tq" d="M1,3L14,10L26,31"/><path class="k2" d="M1,1L14,7L27,28"/><path class="k1" d="M9,31L28,19"/><path class="r" d="M7,9C7,18 14,22 21,20"/><path class="r2" d="M23,13L29,30M29,30L25,26M29,30L31,24"/></svg></div>
<div class="cell"><svg class="ic" viewBox="0 0 32 32"><path class="tq" d="M1,31L12,3"/><path class="k1" d="M1,31L24,11"/><path class="o" d="M1,31L29,27"/><path class="r" d="M9,13C14,13 16,18 13,22M14,22H17V27"/></svg></div>

<div class="cell"><svg class="ic" viewBox="0 0 32 32"><path class="a3" d="M3,5V30"/><path class="k1" d="M5,12V28"/><text class="pm2" x="6" y="19">±</text><path class="k1" d="M15,6Q9,16 15,30"/><text class="pm2" x="14" y="24">=</text><path class="k2" d="M27,12V30"/><rect x="24" y="8" width="4" height="4" fill="#e01010"/><path class="r" d="M21,8H28M24,5L28,8L24,11M31,16V8M29,11L31,8L33,11"/></svg></div>
<div class="cell"><svg class="ic" viewBox="0 0 32 32"><path class="k2" d="M0,1H9M4,1V6L6,8V13L10,18L8,22L12,30M0,14H12M0,30H16M32,1H24M28,1V8L24,12V18L22,24L21,30M20,14H32M18,30H32"/><path class="tq" d="M7,4V8L9,14L13,22L14,29M31,4V9L27,14L25,24L24,30"/><circle cx="10" cy="14" r="1.6" fill="#e01010"/><circle cx="10" cy="21" r="1.6" fill="#e01010"/><circle cx="24" cy="14" r="1.6" fill="#e01010"/></svg></div>
</section>
</div>
<div class="tabs"><span class="tab on">工具栏</span><span class="tab">自定义工具</span></div>
<div class="mark"></div>
</aside>

<div class="work">
<div class="blank"></div>
<svg class="draw" viewBox="245 148 1136 815" aria-label="纸样">
<defs>
<pattern id="tx" patternUnits="userSpaceOnUse" x="269.3" y="165" width="38.4" height="11">
<path class="tick" d="M.5,2V11M8.2,7V11M15.9,7V11M23.5,7V11M31.2,7V11"/>
</pattern>
<pattern id="ty" patternUnits="userSpaceOnUse" x="258" y="188" width="14" height="76.8">
<path class="tick" d="M2,.5H14M8,8.2H14M8,15.9H14M8,23.5H14M8,31.2H14M5,38.9H14M8,46.6H14M8,54.2H14M8,61.9H14M8,69.6H14"/>
</pattern>
<clipPath id="cv"><rect x="272" y="178" width="1106" height="784"/></clipPath>
<path id="nt" d="M32,-28Q14,-17 0,0Q14,17 32,29M39,-22Q25,-13 13,0Q25,13 39,22"/>
</defs>
<rect class="rbg" x="245" y="148" width="1136" height="815"/>
<rect class="wh" x="272" y="177" width="1106" height="785"/>
<rect x="273" y="165" width="1108" height="11" fill="url(#tx)"/>
<rect x="258" y="179" width="14" height="783" fill="url(#ty)"/>
<path class="rline" d="M272,176.5H1378"/>
<path class="vline" d="M271.5,177V962"/>
<path class="mouse" d="M898,150V171"/>
<g class="rt-t">
<text x="306.700" y="161">549</text><text x="383.500" y="161">552</text><text x="460.300" y="161">555</text><text x="537.100" y="161">558</text><text x="613.900" y="161">561</text><text x="690.700" y="161">564</text><text x="767.500" y="161">567</text><text x="844.300" y="161">570</text><text x="921.100" y="161">573</text><text x="997.900" y="161">576</text><text x="1074.700" y="161">579</text><text x="1151.500" y="161">582</text><text x="1228.300" y="161">585</text><text x="1305.100" y="161">588</text>
</g>
<g class="rt-t rt-l">
<text transform="rotate(-90 257 186)" x="257" y="186">-36</text>
<text transform="rotate(-90 257 263)" x="257" y="263">-39</text>
<text transform="rotate(-90 257 340)" x="257" y="340">-42</text>
<text transform="rotate(-90 257 416)" x="257" y="416">-45</text>
<text transform="rotate(-90 257 493)" x="257" y="493">-48</text>
<text transform="rotate(-90 257 570)" x="257" y="570">-51</text>
<text transform="rotate(-90 257 647)" x="257" y="647">-54</text>
<text transform="rotate(-90 257 723)" x="257" y="723">-57</text>
<text transform="rotate(-90 257 800)" x="257" y="800">-60</text>
<text transform="rotate(-90 257 877)" x="257" y="877">-63</text>
</g>
<g clip-path="url(#cv)">
<g class="gl">
<path d="M273,565H1381M326,178V922L305,797M612,178V922L591,797M964,178V922L943,797M786,178V962M805,178L787,962M1228,178L1211,962M1305,178V962M329,178L350,282M615,178L636,282M966,178L988,282M1018,178L1022,198M1356,819L1376,925"/>
<path d="M415,566L403,695L518,565M741,565L700,628L786,565M824,743L1186,642M1190,565L1117,616L1252,565M1250,643L1255,848M403,560V570M531,560V570M728,560V570M855,560V570"/>
<path class="sq" d="M415,178C420,181 424,184 424,188C424,193 410,191 410,197C410,203 419,202 419,208C419,214 404,212 404,218C404,224 415,224 415,230C415,233 410,234 407,234"/>
<path class="sq" d="M1156,178C1162,182 1172,176 1172,182C1172,190 1166,188 1168,194C1170,199 1184,196 1184,204C1184,210 1178,210 1181,215C1184,219 1196,214 1196,220C1196,223 1195,224 1194,226"/>
<use href="#nt" x="341" y="565"/>
<use href="#nt" transform="matrix(-1 0 0 1 570 565)"/>
<use href="#nt" x="688" y="565"/>
<use href="#nt" transform="matrix(-1 0 0 1 895.500 565)"/>
<use href="#nt" x="1134" y="565"/>
<use href="#nt" transform="matrix(-1 0 0 1 1302.500 565)"/>
<circle cx="1241.500" cy="849" r="26"/><circle cx="1241.500" cy="849" r="13"/>
<path class="dsh" d="M1254,737L1230,962M1189,877L1195,962"/>
</g>
<g class="cut">
<path d="M467,178C430,290 415,400 415,520C415,650 445,800 476,962"/>
<path d="M526,178C520,300 522,450 518,575C514,700 475,860 458,962"/>
<path d="M770,178C755,300 741,440 741,565C741,700 770,860 787,962"/>
<path d="M823,178C832,320 844,440 844,560C844,680 812,800 787,962"/>
<path d="M1093,178C1150,250 1250,420 1250,565L1249,643L864,698L790,962"/>
<path d="M1087,178C1130,250 1187,400 1187,570L1184,640V962"/>
</g>
<path class="dsh over" d="M1184,642V880"/>
<g class="lbl">
<text transform="rotate(-90 316 635)" x="316" y="635" textLength="177">165/84A</text>
<text transform="rotate(-90 602 635)" x="602" y="635" textLength="177">165/84A</text>
<text transform="rotate(-90 955 635)" x="955" y="635" textLength="177">165/84A</text>
<text transform="rotate(-90 1366 657)" x="1366" y="657" textLength="177">165/84A</text>
<text class="cn" transform="rotate(-90 369 640)" x="369" y="640" textLength="152">后片<tspan class="big">*2</tspan></text>
<text class="cn" transform="rotate(-90 658 652)" x="658" y="652" textLength="202">后侧片<tspan class="big">*2</tspan></text>
<text class="cn" transform="rotate(-90 1013 636)" x="1013" y="636" textLength="198">前侧片<tspan class="big">*2</tspan></text>
<text x="274" y="732">2</text>
<text x="375" y="723">4</text>
<text x="675" y="664" textLength="51">1. 8</text>
<text x="1094" y="645" textLength="55">2. 5</text>
</g>
</g>
<rect class="red" x="650.500" y="504" width="93.500" height="111" rx="2"/>
<rect class="red" x="820" y="489" width="98" height="124" rx="2"/>
<path class="edge" d="M1378.500,178V962"/>
<rect x="1378" y="263" width="3" height="32" fill="#c6d6e6"/>
</svg>
</div>
</main>
<footer class="status">左键框选定向外导入图片</footer>
</body>
</html>
```

FILE: styles.css
```css
* { box-sizing: border-box; }
html, body { margin: 0; height: 976px; overflow: hidden; }
body {
  position: relative;
  display: flex;
  flex-direction: column;
  width: 1381px;
  font-family: "Noto Sans CJK SC", "Liberation Sans", sans-serif;
  color: #111;
  background: #f0f0f0;
}
.defs { position: absolute; }

/* menu */
.menubar {
  height: 37px;
  flex: none;
  display: flex;
  align-items: center;
  gap: 15px;
  padding: 0 0 6px 16px;
  font-size: 14px;
  line-height: 20px;
  background: linear-gradient(90deg, #e9ecfa, #f0f3fc);
}
.mi { white-space: nowrap; letter-spacing: -.3px; }
.mi u { text-underline-offset: 2px; }

/* toolbar */
.toolbar {
  height: 42px;
  flex: none;
  display: flex;
  align-items: center;
  padding-left: 10px;
  background: linear-gradient(180deg, #f5f7fd 0%, #e9ebf4 35%, #c9cbd9 75%, #a9abbe 100%);
  border-bottom: 2px solid #7c7c7c;
}
.tb { width: 43px; height: 38px; flex: none; display: flex; align-items: center; justify-content: center; }
.tb.sel { background: #cce4f7; outline: 1px solid #0078d7; outline-offset: -1px; }
.drop { width: 14.5px; flex: none; display: flex; justify-content: center; }
.drop::after { content: ""; border: 3.5px solid transparent; border-top: 4px solid #777; border-bottom: 0; }
.ic { width: 32px; height: 32px; display: block; fill: none; overflow: visible; flex: none; }
.ic16 { width: 10px; height: 16px; display: block; }
.fade { opacity: .62; }
.ring {
  width: 27px;
  height: 27px;
  border-radius: 50%;
  background: conic-gradient(#e02a6a, #f08020, #e0d020, #40c040, #20c0c0, #2040d0, #8030c0, #e02a6a);
  -webkit-mask: radial-gradient(ellipse at center, transparent 42%, #000 45%);
  mask: radial-gradient(ellipse at center, transparent 42%, #000 45%);
}
.numbox {
  width: 32px;
  height: 26px;
  margin-left: 3px;
  padding-left: 2px;
  background: #fff;
  font: 12px/13px "Liberation Sans", sans-serif;
  color: #000;
}
.bulb { margin-left: 8px; width: 16px; flex: none; display: flex; justify-content: center; }
.swatch { width: 14px; height: 14px; margin-left: 7px; background: #949494; border: 1px solid #111; flex: none; }
.zero { width: 14px; margin-left: 30px; font: 12px "Liberation Sans", sans-serif; color: #223; text-align: center; padding-top: 4px; }
.mini { flex: none; border: 3px solid transparent; border-top: 4px solid #111; border-bottom: 0; margin-top: -3px; }
.mini.first { margin-left: 27px; margin-right: 5px; }
.thick { width: 50px; height: 4px; background: #000; margin-right: 9px; flex: none; }
.film { width: 30px; height: 22px; margin-left: 8px; flex: none; }
.help { margin-left: 11px; }

/* svg stroke classes */
.ln, .k1 { stroke: #2a2a2a; stroke-width: 1.2; fill: none; }
.k2 { stroke: #222; stroke-width: 1.8; fill: none; }
.b { stroke: #2a90c8; stroke-width: 1.4; fill: none; }
.b2 { stroke: #1e8ccc; stroke-width: 2; fill: none; }
.bt { stroke: #2060b0; stroke-width: 1.6; fill: none; }
.bl { stroke: #33384a; stroke-width: 2; fill: none; }
.sc { stroke: #4a7ab8; stroke-width: 2; fill: none; }
.tq { stroke: #2aa0d0; stroke-width: 1.4; fill: none; }
.o { stroke: #f58a60; stroke-width: 1.4; fill: none; }
.r { stroke: #e82020; stroke-width: 1.3; fill: none; }
.r2 { stroke: #e83030; stroke-width: 1.8; fill: none; }
.g { stroke: #30a040; stroke-width: 1.4; fill: none; }
.grn { stroke: #1e8a30; stroke-width: 2.4; fill: none; }
.a { stroke: #777; stroke-width: 1.2; fill: none; }
.a2 { stroke: #667; stroke-width: 1.6; fill: none; }
.a3 { stroke: #555; stroke-width: 2.4; fill: none; }
.a3.thin { stroke: #9aa; stroke-width: 1.5; }
.n { stroke: #2a2a80; stroke-width: 1.5; fill: none; }
.nv { stroke: #161670; stroke-width: 2.4; fill: none; }
.nv1 { stroke: #3d4a9a; stroke-width: 1.4; fill: none; }
.pk { stroke: #e030b0; stroke-width: 1.3; fill: none; }
.tl { stroke: #30c0b0; stroke-width: 1.3; fill: none; }
.cy { stroke: #10d8f0; stroke-width: 2; stroke-dasharray: 3 2; fill: none; }
.pu { stroke: #6a5acd; stroke-width: 2.4; fill: none; }
.ul { stroke: #8a8ab8; stroke-width: 1.2; fill: #dfe1ef; }
.wl { stroke: #fff; stroke-width: 1.6; fill: none; }
.gc { stroke: #e4e4e4; stroke-width: 3.6; fill: none; }
.wb { stroke: #fff; stroke-width: 2; fill: none; }
.dash { stroke-dasharray: 2 2; }
.dot { stroke: #334; stroke-width: 1; stroke-dasharray: 1.5 1.5; fill: none; }
.dotk { stroke: #222; stroke-width: 1.2; stroke-dasharray: 2 2; fill: none; }
.dotn { stroke: #123; stroke-width: 1.4; stroke-dasharray: 1.5 2; fill: none; }
.rd { stroke: #e02020; stroke-width: 1.3; stroke-dasharray: 2 1.5; fill: none; }
.rd2 { stroke: #e02020; stroke-width: 2; stroke-dasharray: 2 2; fill: none; }
.bd { stroke: #2090e0; stroke-width: 2; stroke-dasharray: 7 2; fill: none; }
.od { stroke: #f58a50; stroke-width: 1.6; stroke-dasharray: 2 1; fill: none; }
.gd { stroke: #30b030; stroke-width: 1.6; stroke-dasharray: 6 2 1 2; fill: none; }
.bdrop { stroke: #1a4fe0; stroke-width: 2; stroke-dasharray: 3 1.5; fill: none; }
.zig { stroke: #3d58a8; stroke-width: 1.2; fill: none; }
.ch { stroke: #3a8fd0; stroke-width: 3; fill: none; }
.spi { stroke: #3a80c0; stroke-width: 4; fill: none; stroke-linecap: round; }
.sew { stroke: #1e50b0; stroke-width: 2; fill: #dce8f8; }
.hatch { stroke: #fff; stroke-width: 1; fill: none; }

/* svg fill classes */
.fb { fill: url(#gb); stroke: #3a55a0; stroke-width: 1; }
.fb.nb { stroke: none; }
.fb.rev { stroke: #445; }
.fbd { fill: #2e6fb8; stroke: #3a4a90; stroke-width: 1.5; }
.fbs { fill: #4f90dc; stroke: #345; stroke-width: 1; }
.fs { fill: #1e70d8; stroke: #345; stroke-width: 1; }
.fh { fill: url(#gh); stroke: #5566aa; stroke-width: 1.2; }
.fh2 { fill: url(#gh); stroke: #4a60a8; stroke-width: 1; }
.fh3 { fill: url(#gb); stroke: #445; stroke-width: 1; }
.fg { fill: url(#gg); stroke: #4a7a50; stroke-width: 1; }
.fg2 { fill: #8a9ab0; stroke: #555; stroke-width: 1; }
.fy { fill: url(#gy); stroke: #b07a28; stroke-width: 1; }
.wf { fill: #f4f7fc; }
.wf2 { fill: #f4f6fb; stroke: #556; stroke-width: 1; }
.wf3 { fill: #f4f4f4; }
.h { fill: #fff; stroke: #222; stroke-width: 1.2; }
.hy { fill: #f5d800; stroke: #222; stroke-width: 1; }
.ho { fill: #fff; stroke: #f58a60; stroke-width: 1.2; }
.hb { fill: #fff; stroke: #4050b0; stroke-width: 1; }
.blk { fill: #fff; stroke: #222; stroke-width: 1.4; }
.blu { fill: #fff; stroke: #2a90c8; stroke-width: 1.4; }
.nf { fill: #20209a; }
.nvf { fill: #1e50b0; }
.bf { fill: #1a3fb0; }
.rt { fill: none; stroke: #e04040; stroke-width: 1.3; }

/* text inside icons */
.sig { font: bold 36px "Liberation Sans", sans-serif; text-anchor: middle; fill: #1e88d0; stroke: #1a4a90; stroke-width: .6; }
.sigs { font: bold 17px "Liberation Sans", sans-serif; text-anchor: middle; fill: #2060b0; }
.pm { font: bold 15px "Liberation Sans", sans-serif; text-anchor: middle; fill: #101070; }
.pm2 { font: bold 12px "Liberation Sans", sans-serif; fill: #222; }
.tee { font: 36px "Liberation Serif", serif; text-anchor: middle; fill: #c0a860; stroke: #665; stroke-width: .8; }
.ell { font: bold 9px "Liberation Sans", sans-serif; fill: #e01010; }
.tiny { font: bold 7px "Liberation Sans", sans-serif; fill: #222; }
.q { font: bold 26px "Liberation Sans", sans-serif; fill: #7a96b8; }

/* layout */
.main { flex: 1; min-height: 0; display: flex; }
.side { width: 245px; flex: none; display: flex; flex-direction: column; background: #e9edfa; }
.side-head {
  height: 26px;
  flex: none;
  width: 241px;
  display: flex;
  align-items: center;
  padding: 0 5px 0 4px;
  background: linear-gradient(180deg, #cbd8e6, #bccddf);
}
.side-title { flex: 1; font-size: 14px; line-height: 20px; }
.pin { width: 10px; height: 12px; margin-right: 9px; }
.close { width: 12px; height: 12px; margin-right: 0; }
.panel {
  width: 240px;
  margin: 1px 0 0 1px;
  flex: 1;
  min-height: 0;
  display: flex;
  flex-direction: column;
  padding: 1px 2px 1px 2px;
  background: #fafbfe;
  border: 1px solid #a6a6a6;
}
.tools {
  display: grid;
  grid-template-columns: repeat(5, 43px);
  grid-auto-rows: 38px;
  padding-left: 1px;
  width: 233px;
  flex: none;
}
.s1 { height: 276px; padding-top: 3px; background: linear-gradient(180deg, #f7f9fe 0%, #f2f4fb 20%, #c8cad9 70%, #aeb1c5 100%); }
.s2 { height: 234px; padding-top: 1px; background: linear-gradient(180deg, #f7f9fe 0%, #f2f4fb 20%, #c8cad9 70%, #aeb1c5 100%); }
.s3 { flex: 1; padding-top: 2px; background: linear-gradient(180deg, #f7f9fe 0%, #eef0f8 30%, #c8cad9 80%, #aeb1c5 100%); }
.cell { display: flex; align-items: center; justify-content: center; min-width: 0; }
.cell.sel { background: #cce4f7; border: 1px solid #0078d7; }
.tabs { height: 28px; flex: none; display: flex; align-items: flex-start; padding: 1px 0 0 3px; font-size: 14px; line-height: 20px; background: #e9edfa; }
.tab { padding: 1px 5px 2px 5px; background: #efeff1; color: #777; border: 1px solid #e4e4e8; border-top: 0; }
.tab.on { padding: 1px 7px 3px 5px; background: #f8f8f8; color: #000; border: 0; }
.mark { position: absolute; left: 33px; top: 328px; width: 72px; height: 60px; border: 4px solid #f0201a; border-radius: 4px; }

.work { flex: 1; min-width: 0; display: flex; flex-direction: column; }
.blank { height: 69px; flex: none; background: #fff; border-left: 2px solid #8a8a8a; margin-left: 0; }
.draw { display: block; width: 1136px; height: 815px; flex: none; }
.status { height: 13px; flex: none; overflow: hidden; padding: 5px 0 0 4px; font-size: 14px; line-height: 20px; border-top: 1px solid #cfcfcf; background: #f0f0f0; }

/* drawing */
.rbg { fill: #f0f0f0; }
.wh { fill: #fff; }
.tick { stroke: #111; stroke-width: 1; fill: none; }
.rline { stroke: #8c8c8c; stroke-width: 2; fill: none; }
.vline { stroke: #777; stroke-width: 2; fill: none; }
.mouse { stroke: #111; stroke-width: 1; fill: none; }
.rt-t text { font: 11px "Liberation Sans", sans-serif; fill: #111; }
.rt-l text { text-anchor: middle; }
.gl { fill: none; stroke: #a2a2a2; stroke-width: 1.4; }
.gl .sq { stroke-width: 2; }
.dsh { fill: none; stroke: #a2a2a2; stroke-width: 1.4; stroke-dasharray: 14 7; }
.dsh.over { stroke: #d0d0d0; stroke-dasharray: 5 4; stroke-width: 1.2; }
.cut { fill: none; stroke: #000; stroke-width: 3.5; stroke-linejoin: round; }
.lbl text { font: 37px "Liberation Serif", "Noto Sans CJK SC", serif; fill: #b2b2b2; }
.lbl text.cn { font: 300 46px "Liberation Serif", "Noto Sans CJK SC", serif; }
.lbl text[textLength="177"] { font-size: 52px; }
.lbl .big { font-size: 56px; }
.red { fill: none; stroke: #f0201a; stroke-width: 4; }
.edge { stroke: #c4c4c4; stroke-width: 1; fill: none; }
```
